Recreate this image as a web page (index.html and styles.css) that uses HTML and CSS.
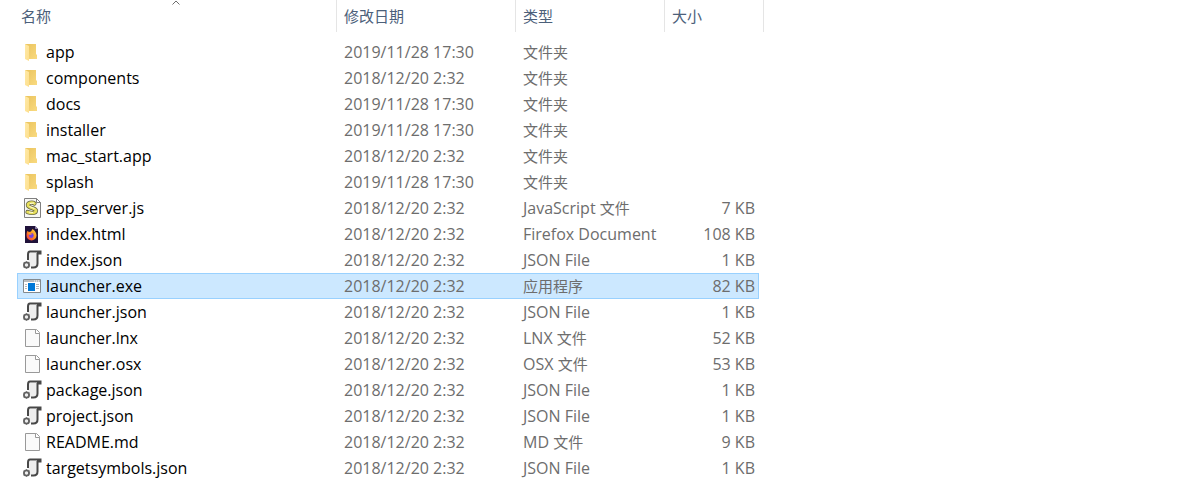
FILE: index.html
```
<!DOCTYPE html>
<html lang="zh-CN">
<head>
    <meta charset="UTF-8">
    <meta name="viewport" content="width=device-width, initial-scale=1.0">
    <title>launcher</title>
    <link rel="stylesheet" href="styles.css">
</head>
<body>
    <svg class="sprite" aria-hidden="true">
        <defs>
            <linearGradient id="flap" x1="0" y1="0" x2="1" y2="1">
                <stop offset="0" stop-color="#ffe9a6"/>
                <stop offset="1" stop-color="#fddf8e"/>
            </linearGradient>
            <linearGradient id="back" x1="0" y1="0" x2="1" y2="1">
                <stop offset="0" stop-color="#eac35c"/>
                <stop offset="1" stop-color="#f9da80"/>
            </linearGradient>
            <linearGradient id="fire" x1="1" y1="0" x2="0" y2="1">
                <stop offset="0" stop-color="#ffe14a"/>
                <stop offset="0.5" stop-color="#ff8a1e"/>
                <stop offset="1" stop-color="#f5284e"/>
            </linearGradient>
        </defs>
        <symbol id="folder" viewBox="0 0 20 20">
            <path d="M3 2h11v10l1 1v4H6z" fill="url(#back)"/>
            <path d="M3 2l4 2v15l-4-2z" fill="url(#flap)"/>
        </symbol>
        <symbol id="js" viewBox="0 0 20 20">
            <path d="M2.500 .5h12l4 4v15h-16z" fill="#f8f8f4" stroke="#808080"/>
            <path d="M14.500 .5v4h4z" fill="#fff" stroke="#808080"/>
            <path d="M12.500 5.500C10 3.500 5.500 5 6 7.500C6.500 10 13.500 10 14 12.500C14 15.500 9 15.500 5.500 14" fill="none" stroke="#6a6a48" stroke-width="4.200" stroke-linecap="round"/>
            <path d="M12.500 5.500C10 3.500 5.500 5 6 7.500C6.500 10 13.500 10 14 12.500C14 15.500 9 15.500 5.500 14" fill="none" stroke="#e8e05c" stroke-width="2.600" stroke-linecap="round"/>
            <path d="M8 5.500l4 -.5M7.500 8.500l5 2M7 14l4 .5" stroke="#fffde0"/>
        </symbol>
        <symbol id="html" viewBox="0 0 20 20">
            <path d="M3 2h10l3 3v14H3z" fill="#20123a"/>
            <path d="M13 2v3h3z" fill="#8a7da3"/>
            <path d="M5.500 7l1.500 1 2 -.5L10.500 5C13 6.500 14.500 9 14.500 11.500a5 5 0 0 1 -10 0C4.500 9.500 4.700 8 5.500 7z" fill="url(#fire)"/>
            <circle cx="9.300" cy="11.500" r="2.400" fill="#7542e5"/>
            <path d="M6 9.500C7.500 8.500 9 9.500 10.500 10L8 11z" fill="#ff9a28"/>
        </symbol>
        <symbol id="json" viewBox="0 0 20 20">
            <path d="M7 3h8v11c0 2-1 3-3 3H8l-2-5z" fill="#eeeeee"/>
            <path d="M6 10V4.500C6 2.500 6.500 1.500 8 1.500h10.500v2H15" fill="none" stroke="#484848" stroke-width="2"/>
            <path d="M15.500 3v10.500c0 2.500-1 4-4 4H9" fill="none" stroke="#484848" stroke-width="2"/>
            <circle cx="4.500" cy="15" r="2.600" fill="#eeeeee" stroke="#606060" stroke-width="1.800"/>
            <path d="M4.500 11v1M1 15h.5M2 12.500l.5 .5M7.500 12.500l-.5 .5M2 17.500l.5 -.5M4.500 18v1" stroke="#808080"/>
        </symbol>
        <symbol id="exe" viewBox="0 0 20 20">
            <path d="M1.500 3.500h17v13h-17z" fill="#fff" stroke="#83898d"/>
            <path d="M2 4h16v2H2z" fill="#b9bdc0"/>
            <path d="M12 5h1M14 5h1M16 5h1" stroke="#fff"/>
            <path d="M6 7h7v8H6z" fill="#0078d7"/>
            <path d="M3 8.500h2M3 10.500h2M3 12.500h2M14 8.500h3M14 10.500h3M14 12.500h3" stroke="#b4b8bb"/>
        </symbol>
        <symbol id="file" viewBox="0 0 20 20">
            <path d="M3.500 1.500h11l3 3v14h-14z" fill="#fafafa" stroke="#999"/>
            <path d="M13.500 1.500v4h4" fill="#fff" stroke="#999"/>
        </symbol>
    </svg>

    <table class="files">
        <colgroup>
            <col class="col-name">
            <col class="col-date">
            <col class="col-type">
            <col class="col-size">
            <col class="col-end">
        </colgroup>
        <thead>
            <tr>
                <th class="name" aria-sort="ascending">
                    <button type="button">名称</button>
                    <svg class="sort" viewBox="0 0 8 5" aria-hidden="true"><path d="M.5 4.500l3.500-3.500 3.500 3.500"/></svg>
                </th>
                <th><button type="button">修改日期</button></th>
                <th><button type="button">类型</button></th>
                <th colspan="2"><button type="button">大小</button></th>
            </tr>
        </thead>
        <tbody>
            <tr><td class="name"><svg class="icon"><use href="#folder"/></svg>app</td><td>2019/11/28 17:30</td><td class="han">文件夹</td><td class="size"></td></tr>
            <tr><td class="name"><svg class="icon"><use href="#folder"/></svg>components</td><td>2018/12/20 2:32</td><td class="han">文件夹</td><td class="size"></td></tr>
            <tr><td class="name"><svg class="icon"><use href="#folder"/></svg>docs</td><td>2019/11/28 17:30</td><td class="han">文件夹</td><td class="size"></td></tr>
            <tr><td class="name"><svg class="icon"><use href="#folder"/></svg>installer</td><td>2019/11/28 17:30</td><td class="han">文件夹</td><td class="size"></td></tr>
            <tr><td class="name"><svg class="icon"><use href="#folder"/></svg>mac_start.app</td><td>2018/12/20 2:32</td><td class="han">文件夹</td><td class="size"></td></tr>
            <tr><td class="name"><svg class="icon"><use href="#folder"/></svg>splash</td><td>2019/11/28 17:30</td><td class="han">文件夹</td><td class="size"></td></tr>
            <tr><td class="name"><svg class="icon"><use href="#js"/></svg>app_server.js</td><td>2018/12/20 2:32</td><td>JavaScript <span class="han">文件</span></td><td class="size">7 KB</td></tr>
            <tr><td class="name"><svg class="icon"><use href="#html"/></svg>index.html</td><td>2018/12/20 2:32</td><td>Firefox Document</td><td class="size">108 KB</td></tr>
            <tr><td class="name"><svg class="icon"><use href="#json"/></svg>index.json</td><td>2018/12/20 2:32</td><td>JSON File</td><td class="size">1 KB</td></tr>
            <tr class="selected"><td class="name"><svg class="icon"><use href="#exe"/></svg>launcher.exe</td><td>2018/12/20 2:32</td><td class="han">应用程序</td><td class="size">82 KB</td></tr>
            <tr><td class="name"><svg class="icon"><use href="#json"/></svg>launcher.json</td><td>2018/12/20 2:32</td><td>JSON File</td><td class="size">1 KB</td></tr>
            <tr><td class="name"><svg class="icon"><use href="#file"/></svg>launcher.lnx</td><td>2018/12/20 2:32</td><td>LNX <span class="han">文件</span></td><td class="size">52 KB</td></tr>
            <tr><td class="name"><svg class="icon"><use href="#file"/></svg>launcher.osx</td><td>2018/12/20 2:32</td><td>OSX <span class="han">文件</span></td><td class="size">53 KB</td></tr>
            <tr><td class="name"><svg class="icon"><use href="#json"/></svg>package.json</td><td>2018/12/20 2:32</td><td>JSON File</td><td class="size">1 KB</td></tr>
            <tr><td class="name"><svg class="icon"><use href="#json"/></svg>project.json</td><td>2018/12/20 2:32</td><td>JSON File</td><td class="size">1 KB</td></tr>
            <tr><td class="name"><svg class="icon"><use href="#file"/></svg>README.md</td><td>2018/12/20 2:32</td><td>MD <span class="han">文件</span></td><td class="size">9 KB</td></tr>
            <tr><td class="name"><svg class="icon"><use href="#json"/></svg>targetsymbols.json</td><td>2018/12/20 2:32</td><td>JSON File</td><td class="size">1 KB</td></tr>
        </tbody>
    </table>
</body>
</html>
```

FILE: styles.css
```
body {
    margin: 0;
    padding: 0 17px;
    background-color: #fff;
    color: #6d6d6d;
    font-family: "Open Sans", "Noto Sans CJK SC", sans-serif;
    font-size: 16px;
    line-height: 26px;
}
.sprite {
    position: absolute;
    width: 0;
    height: 0;
}
.files {
    border-spacing: 0;
}
.col-name {
    width: 320px;
}
.col-date {
    width: 179px;
}
.col-type {
    width: 149px;
}
.col-size {
    width: 94px;
}
.col-end {
    width: 5px;
}
th, td {
    box-sizing: border-box;
    padding: 0 0 0 7px;
    text-align: left;
    font-weight: normal;
    white-space: nowrap;
}
th {
    position: relative;
    height: 32px;
    border-right: 1px solid #e5e5e5;
    font-size: 15px;
}
th.name {
    padding-left: 4px;
}
th button {
    display: block;
    width: 100%;
    padding: 0;
    border: none;
    background: none;
    color: #4c607a;
    font: inherit;
    text-align: left;
}
.sort {
    position: absolute;
    top: 0;
    left: 50%;
    width: 8px;
    height: 5px;
    margin-left: -5px;
    fill: none;
    stroke: #6d6d6d;
}
/* space between the header and the first row */
tbody::before {
    content: "";
    display: table-row;
    height: 7px;
}
td {
    height: 26px;
    line-height: 24px;
}
td.name {
    padding-left: 5px;
    color: #000;
}
td.size {
    padding: 0 4px 0 0;
    text-align: right;
}
/* Chinese glyphs look larger than Latin ones at the same size */
.han {
    font-size: 15px;
}
.icon {
    float: left;
    width: 20px;
    height: 20px;
    margin: 2px 4px 0 0;
}
.selected td {
    background-color: #cce8ff;
    border-top: 1px solid #99d1ff;
    border-bottom: 1px solid #99d1ff;
}
.selected td.name {
    padding-left: 4px;
    border-left: 1px solid #99d1ff;
}
.selected td.size {
    padding-right: 3px;
    border-right: 1px solid #99d1ff;
}
```
